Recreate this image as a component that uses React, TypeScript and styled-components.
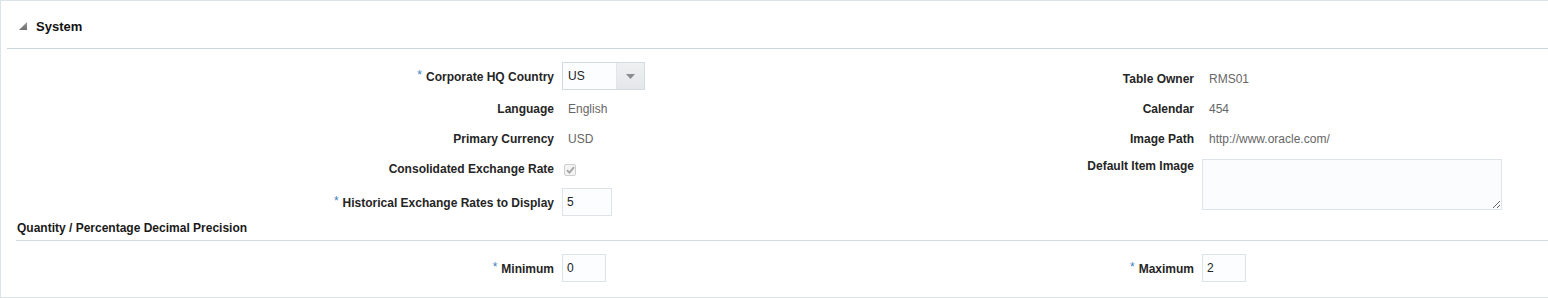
import React from "react";
import styled, { createGlobalStyle } from "styled-components";

const GlobalStyle = createGlobalStyle`
  html, body { margin: 0; padding: 0; background: #ffffff; }
  body { font-family: "Liberation Sans", Arial, sans-serif; font-size: 12px; color: #333333; }
  * { box-sizing: border-box; }
`;

const Panel = styled.section`
  width: 1548px;
  height: 298px;
  border-left: 1px solid #dbe2e8;
  border-top: 1px solid #dbe2e8;
  border-bottom: 1px solid #dbe2e8;
  background: #ffffff;
  display: flex;
  flex-direction: column;
`;

const Header = styled.header`
  margin-left: 6px;
  height: 48px;
  padding: 4px 0 0 12px;
  border-bottom: 1px solid #c9d5df;
  display: flex;
  align-items: center;
  gap: 9px;
`;

const Disclosure = styled.svg`
  width: 8px;
  height: 8px;
  margin-bottom: 2px;
  flex: none;
`;

const Title = styled.h2`
  margin: 0;
  font-size: 13px;
  font-weight: bold;
  color: #111111;
`;

const Body = styled.div`
  display: flex;
  flex-direction: column;
  flex: 1;
`;

const Columns = styled.div<{ $pad: number }>`
  display: flex;
  align-items: flex-start;
  padding-top: ${(p) => p.$pad}px;
`;

const Column = styled.div<{ $width?: number; $pad?: number }>`
  display: flex;
  flex-direction: column;
  width: ${(p) => (p.$width ? `${p.$width}px` : "auto")};
  flex: ${(p) => (p.$width ? "none" : "1")};
  padding-top: ${(p) => p.$pad ?? 0}px;
`;

const Row = styled.div<{ $top?: boolean }>`
  display: grid;
  grid-template-columns: 553px 1fr;
  column-gap: 8px;
  padding: ${(p) => (p.$top ? "5px 0 4px" : "4px 0")};
  align-items: ${(p) => (p.$top ? "start" : "center")};
  min-height: 30px;
`;

const Label = styled.label<{ $top?: boolean }>`
  text-align: right;
  white-space: nowrap;
  font-weight: bold;
  color: #252525;
  line-height: ${(p) => (p.$top ? "14px" : "22px")};
`;

const Star = styled.span`
  color: #3f7fc1;
  font-weight: normal;
  margin-right: 4px;
  vertical-align: 2px;
`;

const ReadOnly = styled.span<{ $indent?: number }>`
  padding-left: ${(p) => p.$indent ?? 6}px;
  line-height: 22px;
  color: #666666;
`;

const SelectBox = styled.div`
  width: 83px;
  height: 28px;
  border: 1px solid #d3dae0;
  background: #fcfdfe;
  display: flex;
  align-items: stretch;
`;

const SelectValue = styled.span`
  flex: 1;
  padding-left: 5px;
  line-height: 26px;
  color: #222222;
`;

const SelectButton = styled.span`
  width: 28px;
  border-left: 1px solid #e2e6e9;
  background: linear-gradient(#eef0f1, #e4e7e9);
  display: flex;
  align-items: center;
  justify-content: center;
`;

const TextInput = styled.input<{ $w: number }>`
  width: ${(p) => p.$w}px;
  height: 28px;
  border: 1px solid #dde3e8;
  background: #fcfdfe;
  padding: 0 0 0 4px;
  font-family: inherit;
  font-size: 12px;
  color: #222222;
  outline: none;
`;

const TextArea = styled.textarea`
  width: 300px;
  height: 51px;
  border: 1px solid #dde3e8;
  background: #fbfcfd;
  font-family: inherit;
  font-size: 12px;
  resize: both;
  outline: none;
  display: block;
`;

const CheckBox = styled.span`
  width: 12px;
  height: 12px;
  margin-left: 2px;
  border: 1px solid #cfcfcf;
  border-radius: 2px;
  background: #f3f3f3;
  display: inline-flex;
  align-items: center;
  justify-content: center;
  vertical-align: middle;
`;

const SubHeader = styled.h3`
  margin: 0 0 0 15px;
  padding: 0 0 4px 1px;
  font-size: 12px;
  font-weight: bold;
  line-height: 16px;
  color: #1a1a1a;
  border-bottom: 1px solid #d3dce4;
`;

const Req = () => <Star>*</Star>;

export default function App() {
  return (
    <>
      <GlobalStyle />
      <Panel>
        <Header>
          <Disclosure viewBox="0 0 8 8">
            <defs>
              <linearGradient id="tri" x1="0" y1="0" x2="0" y2="1">
                <stop offset="0" stopColor="#9a9a9a" />
                <stop offset="1" stopColor="#6e6e6e" />
              </linearGradient>
            </defs>
            <polygon points="8,0 8,8 0,8" fill="url(#tri)" />
          </Disclosure>
          <Title>System</Title>
        </Header>
        <Body>
          <Columns $pad={9}>
            <Column $width={640}>
              <Row>
                <Label><Req />Corporate HQ Country</Label>
                <div>
                  <SelectBox>
                    <SelectValue>US</SelectValue>
                    <SelectButton>
                      <svg width="9" height="5" viewBox="0 0 9 5">
                        <polygon points="0,0 9,0 4.5,5" fill="#8a8d90" />
                      </svg>
                    </SelectButton>
                  </SelectBox>
                </div>
              </Row>
              <Row>
                <Label>Language</Label>
                <ReadOnly>English</ReadOnly>
              </Row>
              <Row>
                <Label>Primary Currency</Label>
                <ReadOnly>USD</ReadOnly>
              </Row>
              <Row>
                <Label>Consolidated Exchange Rate</Label>
                <div>
                  <CheckBox>
                    <svg width="9" height="8" viewBox="0 0 9 8">
                      <path d="M1 4.2 L3.4 6.6 L8 1.2" stroke="#a5a5a5" strokeWidth="1.8" fill="none" />
                    </svg>
                  </CheckBox>
                </div>
              </Row>
              <Row>
                <Label><Req />Historical Exchange Rates to Display</Label>
                <div>
                  <TextInput $w={50} defaultValue="5" />
                </div>
              </Row>
            </Column>
            <Column $pad={6}>
              <Row>
                <Label>Table Owner</Label>
                <ReadOnly $indent={7}>RMS01</ReadOnly>
              </Row>
              <Row>
                <Label>Calendar</Label>
                <ReadOnly $indent={7}>454</ReadOnly>
              </Row>
              <Row>
                <Label>Image Path</Label>
                <ReadOnly $indent={7}>http://www.oracle.com/</ReadOnly>
              </Row>
              <Row $top>
                <Label $top>Default Item Image</Label>
                <div>
                  <TextArea />
                </div>
              </Row>
            </Column>
          </Columns>
          <SubHeader>Quantity / Percentage Decimal Precision</SubHeader>
          <Columns $pad={9}>
            <Column $width={640}>
              <Row>
                <Label><Req />Minimum</Label>
                <div>
                  <TextInput $w={44} defaultValue="0" />
                </div>
              </Row>
            </Column>
            <Column>
              <Row>
                <Label><Req />Maximum</Label>
                <div>
                  <TextInput $w={44} defaultValue="2" />
                </div>
              </Row>
            </Column>
          </Columns>
        </Body>
      </Panel>
    </>
  );
}
